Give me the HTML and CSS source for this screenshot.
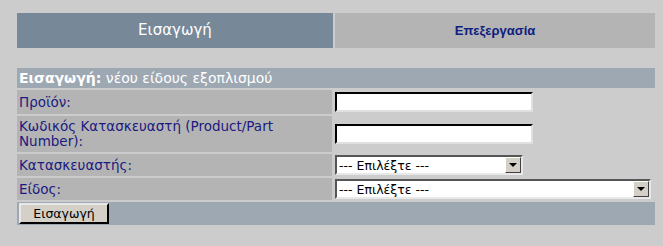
FILE: index.html
```html
<!DOCTYPE html>
<html lang="el">
<head>
<meta charset="UTF-8" />
<title>Εισαγωγή</title>
<link rel="stylesheet" href="styles.css">
</head>
<body>

<div class="tabs">
  <div class="tab active">Εισαγωγή</div>
  <div class="tab">Επεξεργασία</div>
</div>

<table class="form">
  <tr class="head">
    <td colspan="2"><b>Εισαγωγή:</b> νέου είδους εξοπλισμού</td>
  </tr>
  <tr class="r1">
    <td class="lbl">Προϊόν:</td>
    <td class="fld"><input type="text" class="txt"></td>
  </tr>
  <tr class="r2">
    <td class="lbl">Κωδικός Κατασκευαστή (Product/Part Number):</td>
    <td class="fld"><input type="text" class="txt"></td>
  </tr>
  <tr class="r3">
    <td class="lbl">Κατασκευαστής:</td>
    <td class="fld">
      <div class="sel short"><select><option>--- Επιλέξτε ---</option></select><span class="arrow"></span></div>
    </td>
  </tr>
  <tr class="r3">
    <td class="lbl">Είδος:</td>
    <td class="fld">
      <div class="sel"><select><option>--- Επιλέξτε ---</option></select><span class="arrow"></span></div>
    </td>
  </tr>
  <tr class="foot">
    <td colspan="2"><button>Εισαγωγή</button></td>
  </tr>
</table>

</body>
</html>
```

FILE: styles.css
```css
body {
  margin: 0;
  padding: 13px 8px 0 17px;
  background: #cccccc;
  font-family: "DejaVu Sans", Verdana, sans-serif;
}
.tabs {
  display: flex;
  gap: 2px;
  width: 638px;
  height: 35px;
}
.tab {
  display: flex;
  align-items: center;
  justify-content: center;
  width: 320px;
  background: #b4b4b4;
  color: #0d2080;
  font-family: "Liberation Sans", Arial, sans-serif;
  font-weight: bold;
  font-size: 13px;
}
.tab.active {
  width: 316px;
  background: #778899;
  color: #fff;
  font-family: "DejaVu Sans", Tahoma, sans-serif;
  font-weight: normal;
  font-size: 15px;
  padding-bottom: 2px;
}
.form {
  margin-top: 18px;
  width: 638px;
  border-collapse: separate;
  border-spacing: 0 2px;
  font-size: 13.5px;
}
.form td {
  padding: 0;
}
.head td {
  height: 20px;
  background: #9ea8b3;
  color: #fff;
  padding-left: 2px;
  font-size: 14px;
}
.lbl {
  width: 313px;
  background: #b4b4b4;
  color: #1a1a80;
  padding-left: 2px !important;
  line-height: 15px;
}
.r1 td { height: 24px; }
.r2 td { height: 36px; }
.r3 td { height: 22px; }
.fld {
  padding-left: 3px !important;
}
.txt {
  display: block;
  box-sizing: border-box;
  width: 198px;
  height: 20px;
  margin: 0;
  border: 2px inset #e0e0e0;
  border-top-color: #404040;
  border-left-color: #404040;
  background: #fff;
}
.sel {
  display: flex;
  box-sizing: border-box;
  width: 316px;
  height: 20px;
  border: 2px solid #e8e8e8;
  border-top-color: #555;
  border-left-color: #555;
  background: #fff;
}
.sel.short {
  width: 188px;
}
.sel select {
  flex: 1;
  min-width: 0;
  appearance: none;
  border: none;
  background: #fff;
  padding: 0 2px;
  font-family: "DejaVu Sans", Tahoma, sans-serif;
  font-size: 12.5px;
  color: #000;
  outline: none;
}
.arrow {
  display: flex;
  align-items: center;
  justify-content: center;
  box-sizing: border-box;
  width: 16px;
  border: 1px solid;
  border-color: #fff #404040 #404040 #fff;
  background: #d4d0c8;
}
.arrow::after {
  content: "";
  border-left: 4px solid transparent;
  border-right: 4px solid transparent;
  border-top: 4px solid #000;
}
.foot td {
  height: 23px;
  background: #9ea8b3;
  padding-left: 2px;
}
button {
  display: block;
  width: 90px;
  height: 21px;
  padding: 0;
  background: #d4d0c8;
  border: 2px outset #e8e8e8;
  border-right-color: #404040;
  border-bottom-color: #404040;
  font-family: "DejaVu Sans", Tahoma, sans-serif;
  font-size: 12.5px;
  color: #000;
}
```
